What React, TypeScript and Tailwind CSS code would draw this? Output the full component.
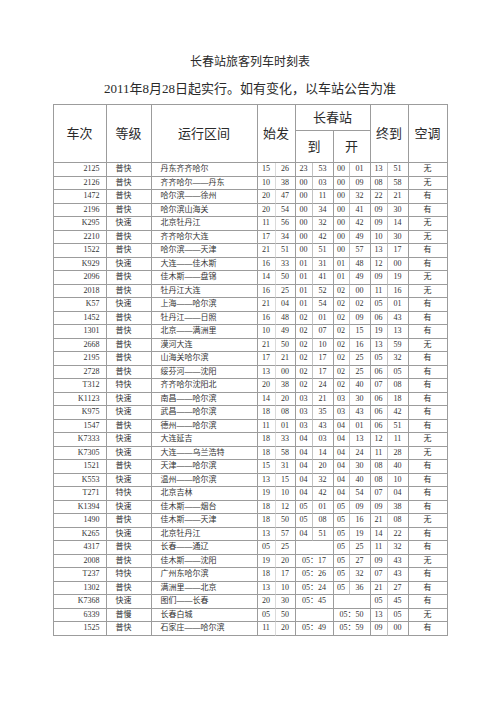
import React from 'react';

// Each row: 车次|等级|运行区间|始发|到|开|终到|空调
// "hh mm" → split cell, "05：17" → merged cell, "" → empty merged cell.
const rows = [
  '2125|普快|丹东齐齐哈尔|15 26|23 53|00 01|13 51|无',
  '2126|普快|齐齐哈尔——丹东|10 38|00 03|00 09|08 58|无',
  '1472|普快|哈尔滨——徐州|20 47|00 11|00 32|22 21|有',
  '2196|普快|哈尔滨山海关|20 54|00 34|00 41|09 30|有',
  'K295|快速|北京牡丹江|11 56|00 32|00 42|09 14|无',
  '2210|普快|齐齐哈尔大连|17 34|00 42|00 49|10 30|无',
  '1522|普快|哈尔滨——天津|21 51|00 51|00 57|13 17|有',
  'K929|快速|大连——佳木斯|16 33|01 31|01 48|12 00|有',
  '2096|普快|佳木斯——盘锦|14 50|01 41|01 49|09 19|无',
  '2018|普快|牡丹江大连|16 25|01 52|02 00|11 16|无',
  'K57|快速|上海——哈尔滨|21 04|01 54|02 02|05 01|有',
  '1452|普快|牡丹江——日照|16 48|02 01|02 09|06 43|有',
  '1301|普快|北京——满洲里|10 49|02 07|02 15|19 13|有',
  '2668|普快|漠河大连|21 50|02 10|02 16|13 59|无',
  '2195|普快|山海关哈尔滨|17 21|02 17|02 25|05 32|有',
  '2728|普快|绥芬河——沈阳|13 00|02 17|02 25|06 05|有',
  'T312|特快|齐齐哈尔沈阳北|20 38|02 24|02 40|07 08|有',
  'K1123|快速|南昌——哈尔滨|14 20|03 21|03 30|06 18|有',
  'K975|快速|武昌——哈尔滨|18 08|03 35|03 43|06 42|有',
  '1547|普快|德州——哈尔滨|11 01|03 43|04 01|06 51|有',
  'K7333|快速|大连延吉|18 33|04 03|04 13|12 11|无',
  'K7305|快速|大连——乌兰浩特|18 58|04 14|04 24|11 28|无',
  '1521|普快|天津——哈尔滨|15 31|04 20|04 30|08 40|有',
  'K553|快速|温州——哈尔滨|13 15|04 32|04 40|08 10|有',
  'T271|特快|北京吉林|19 10|04 42|04 54|07 04|有',
  'K1394|快速|佳木斯——烟台|18 12|05 01|05 09|09 38|有',
  '1490|普快|佳木斯——天津|18 50|05 08|05 16|21 08|无',
  'K265|快速|北京牡丹江|13 57|04 51|05 19|14 22|有',
  '4317|普快|长春——通辽|05 25||05 25|11 32|有',
  '2008|普快|佳木斯——沈阳|19 20|05：17|05 27|09 43|无',
  'T237|特快|广州东哈尔滨|18 17|05：26|05 32|07 43|有',
  '1302|普快|满洲里——北京|13 10|05：24|05 36|21 27|有',
  'K7368|快速|图们——长春|20 30|05：45||05 45|有',
  '6339|普慢|长春白城|05 50||05：50|13 05|无',
  '1525|普快|石家庄——哈尔滨|11 20|05：49|05：59|09 00|有',
].map((r) => r.split('|'));

const cell = 'flex items-center justify-center border-r border-b border-[#9c9c9c]';
const hourCell =
  'flex items-center justify-center border-r border-b border-r-[#c2c2c2] border-b-[#9c9c9c]';
const depHourCell =
  'flex items-center justify-center border-r border-b border-r-[#dadada] border-b-[#9c9c9c]';
const head = 'flex items-center justify-center border-r border-b border-[#9c9c9c] text-[13px] text-[#2a2a2a]';

const Time = ({ v, faint }: { v: string; faint?: boolean }) => {
  if (v.includes(' ')) {
    const [h, m] = v.split(' ');
    return (
      <>
        <div className={faint ? depHourCell : hourCell}>{h}</div>
        <div className={cell}>{m}</div>
      </>
    );
  }
  return <div className={`col-span-2 ${cell}`}>{v}</div>;
};

export default function App() {
  return (
    <div className="w-[500px] h-[707px] bg-white font-['Liberation_Serif','Noto_Sans_CJK_SC',serif] text-[#333]">
      <div className="flex flex-col items-center pt-[54px]">
        <h1 className="text-[12px] leading-[16px] text-[#2a2a2a]">长春站旅客列车时刻表</h1>
        <p className="mt-[11px] text-[13px] leading-[16px] text-[#2a2a2a]">
          2011年8月28日起实行。如有变化，以车站公告为准
        </p>

        <div className="mt-[7px] grid grid-cols-[53px_45px_106px_18px_20px_17px_21px_16px_21px_17px_21px_39px] grid-rows-[26px_32px] auto-rows-[13.5px] border-l border-t border-[#9c9c9c] leading-none">
          {/* Header */}
          <div className={`row-span-2 ${head}`}>车次</div>
          <div className={`row-span-2 ${head}`}>等级</div>
          <div className={`row-span-2 ${head}`}>运行区间</div>
          <div className={`row-span-2 col-span-2 ${head}`}>始发</div>
          <div className={`col-span-4 ${head}`}>长春站</div>
          <div className={`row-span-2 col-span-2 ${head}`}>终到</div>
          <div className={`row-span-2 ${head}`}>空调</div>
          <div className={`col-start-6 col-span-2 ${head}`}>到</div>
          <div className={`col-span-2 ${head}`}>开</div>

          {/* Body */}
          {rows.map(([no, grade, route, dep, arr, lv, end, ac]) => (
            <React.Fragment key={no}>
              <div className="flex items-center justify-end pr-[6px] border-r border-b border-[#9c9c9c] text-[8px]">
                {no}
              </div>
              <div className="flex items-center pl-[9px] border-r border-b border-[#9c9c9c] text-[8px]">
                {grade}
              </div>
              <div className="flex items-center pl-[9px] border-r border-b border-[#9c9c9c] text-[8px] whitespace-nowrap">
                {route}
              </div>
              <div className="contents text-[8px]">
                <Time v={dep} faint />
                <Time v={arr} />
                <Time v={lv} />
                <Time v={end} />
              </div>
              <div className={`${cell} text-[8px]`}>{ac}</div>
            </React.Fragment>
          ))}
        </div>
      </div>
    </div>
  );
}
